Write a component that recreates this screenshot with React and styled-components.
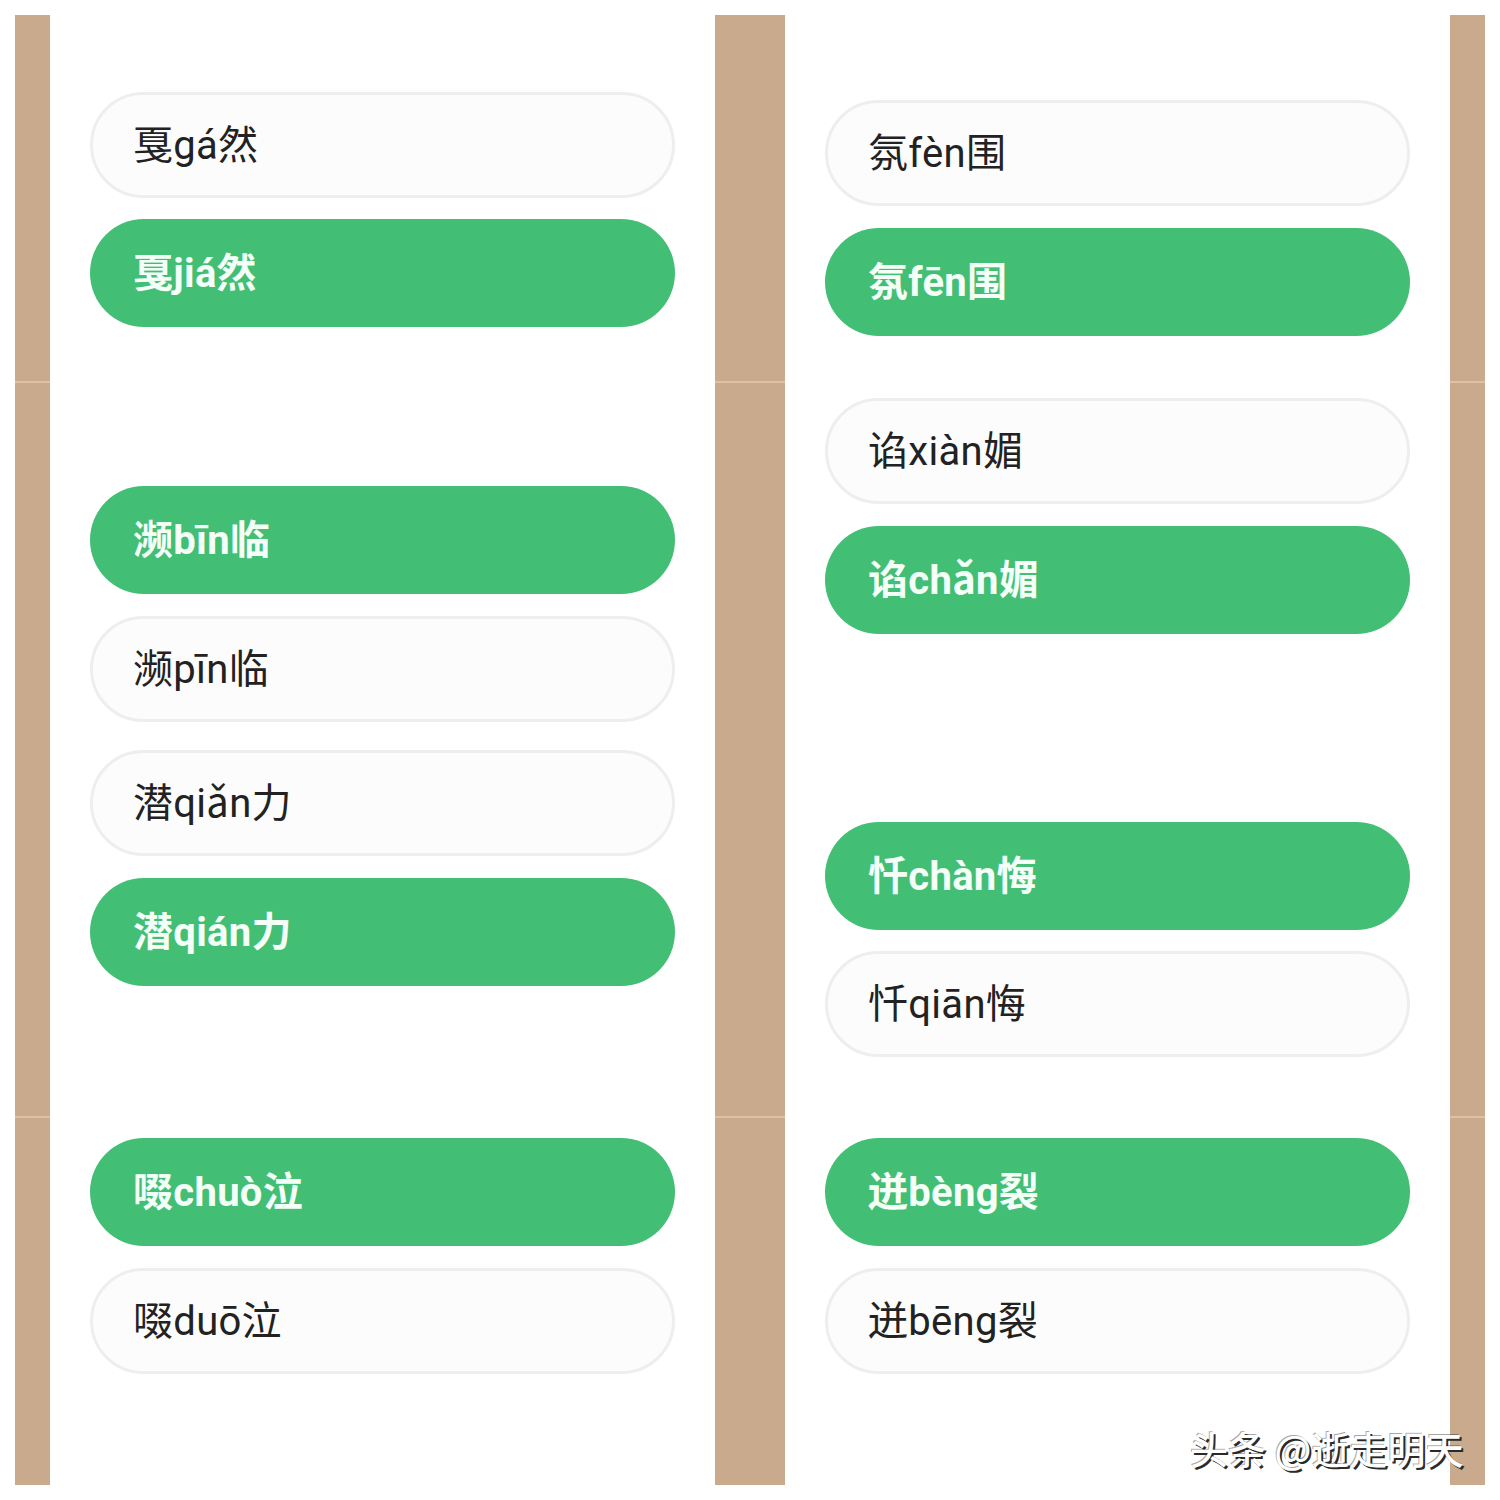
import React from 'react';
import styled, { createGlobalStyle } from 'styled-components';

const GlobalStyle = createGlobalStyle`
  html, body {
    margin: 0;
    padding: 0;
    background: #ffffff;
  }
  body {
    font-family: Roboto, "Noto Sans CJK SC", sans-serif;
  }
`;

const Page = styled.div`
  position: relative;
  width: 1500px;
  height: 1500px;
  box-sizing: border-box;
  padding: 15px;
  background: #ffffff;
`;

const Board = styled.div`
  display: grid;
  grid-template-columns: 35px 665px 70px 665px 35px;
  height: 1470px;
`;

const Strip = styled.div`
  background:
    linear-gradient(
      to bottom,
      transparent 366px,
      rgba(255, 236, 214, 0.35) 366px,
      rgba(255, 236, 214, 0.35) 368px,
      transparent 368px,
      transparent 1101px,
      rgba(255, 236, 214, 0.35) 1101px,
      rgba(255, 236, 214, 0.35) 1103px,
      transparent 1103px
    ),
    #c9aa8c;
`;

const Panel = styled.div`
  display: flex;
  flex-direction: column;
  padding: 0 40px;
  background: #ffffff;
`;

const Pill = styled.div`
  display: flex;
  align-items: center;
  flex-shrink: 0;
  box-sizing: border-box;
  margin-top: ${(p) => p.$gap}px;
  height: ${(p) => (p.$on ? 108 : 106)}px;
  padding-left: ${(p) => (p.$on ? 43 : 40)}px;
  padding-bottom: 6px;
  border-radius: 56px;
  border: ${(p) => (p.$on ? 'none' : '3px solid #eeeef0')};
  background: ${(p) => (p.$on ? '#42be75' : '#fcfcfd')};
  color: ${(p) => (p.$on ? '#f4fff8' : '#222222')};
  font-family: Roboto, "Noto Sans CJK SC", sans-serif;
  font-size: 40px;
  font-weight: ${(p) => (p.$on ? 700 : 400)};
  letter-spacing: 0.3px;
`;

const Watermark = styled.div`
  position: absolute;
  left: 1190px;
  top: 1420px;
  color: #ffffff;
  font-family: "Noto Sans CJK SC", sans-serif;
  font-size: 38px;
  font-weight: 500;
  white-space: nowrap;
  text-shadow: 2px 2px 0 #2a2a2a, -1px -1px 0 rgba(0, 0, 0, 0.35);
`;

const left = [
  { t: '戛gá然', on: false, gap: 77 },
  { t: '戛jiá然', on: true, gap: 21 },
  { t: '濒bīn临', on: true, gap: 159 },
  { t: '濒pīn临', on: false, gap: 22 },
  { t: '潜qiǎn力', on: false, gap: 28 },
  { t: '潜qián力', on: true, gap: 22 },
  { t: '啜chuò泣', on: true, gap: 152 },
  { t: '啜duō泣', on: false, gap: 22 },
];

const right = [
  { t: '氛fèn围', on: false, gap: 85 },
  { t: '氛fēn围', on: true, gap: 22 },
  { t: '谄xiàn媚', on: false, gap: 62 },
  { t: '谄chǎn媚', on: true, gap: 22 },
  { t: '忏chàn悔', on: true, gap: 188 },
  { t: '忏qiān悔', on: false, gap: 21 },
  { t: '迸bèng裂', on: true, gap: 81 },
  { t: '迸bēng裂', on: false, gap: 22 },
];

const Column = ({ items }) => (
  <Panel>
    {items.map((it) => (
      <Pill key={it.t} $on={it.on} $gap={it.gap}>
        {it.t}
      </Pill>
    ))}
  </Panel>
);

export default function App() {
  return (
    <Page>
      <GlobalStyle />
      <Board>
        <Strip />
        <Column items={left} />
        <Strip />
        <Column items={right} />
        <Strip />
      </Board>
      <Watermark>头条 @逝走明天</Watermark>
    </Page>
  );
}
